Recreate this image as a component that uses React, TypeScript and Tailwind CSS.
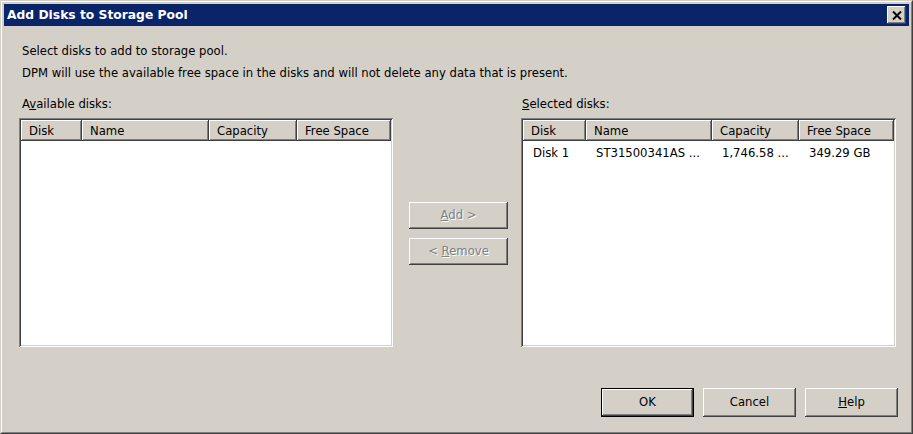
import React from "react";

const raised =
  "shadow-[inset_-1px_-1px_#404040,inset_1px_1px_#ffffff,inset_-2px_-2px_#808080,inset_2px_2px_#d4d0c8]";
const header =
  "shadow-[inset_-1px_-1px_#404040,inset_1px_1px_#ffffff,inset_-2px_-2px_#808080]";

function ListBox({
  cols,
  rows,
}: {
  cols: { label: string; w: number }[];
  rows: string[][];
}) {
  return (
    <div className="h-[229px] bg-white p-[2px] shadow-[inset_1px_1px_#808080,inset_-1px_-1px_#ffffff,inset_2px_2px_#404040,inset_-2px_-2px_#d4d0c8]">
      <div className="flex h-[21px] bg-[#d4d0c8]">
        {cols.map((c) => (
          <div
            key={c.label}
            className={`flex items-center pl-[8px] pt-[3px] whitespace-nowrap ${header}`}
            style={{ width: c.w }}
          >
            {c.label}
          </div>
        ))}
      </div>
      {rows.map((r, i) => (
        <div key={i} className="flex h-[23px] items-center pt-[3px]">
          {r.map((t, j) => (
            <div
              key={j}
              className="pl-[10px] whitespace-nowrap"
              style={{ width: cols[j].w }}
            >
              {t}
            </div>
          ))}
        </div>
      ))}
    </div>
  );
}

function Btn({
  children,
  disabled,
  isDefault,
  className = "",
}: {
  children: React.ReactNode;
  disabled?: boolean;
  isDefault?: boolean;
  className?: string;
}) {
  const inner = (
    <div
      className={`flex h-full w-full items-center justify-center ${raised} ${
        disabled ? "text-[#808080] [text-shadow:1px_1px_0_#ffffff]" : "text-black"
      }`}
    >
      {children}
    </div>
  );
  if (isDefault) {
    return (
      <div className={`border border-black ${className}`}>{inner}</div>
    );
  }
  return <div className={className}>{inner}</div>;
}

export default function App() {
  const leftCols = [
    { label: "Disk", w: 61 },
    { label: "Name", w: 127 },
    { label: "Capacity", w: 88 },
    { label: "Free Space", w: 94 },
  ];
  const rightCols = [
    { label: "Disk", w: 63 },
    { label: "Name", w: 126 },
    { label: "Capacity", w: 87 },
    { label: "Free Space", w: 95 },
  ];
  return (
    <div
      className="relative h-[434px] w-[913px] overflow-hidden bg-[#d4d0c8] text-[11.65px] text-black"
      style={{ fontFamily: '"DejaVu Sans", Verdana, sans-serif' }}
    >
      <div className="h-full w-full border border-t-[#d4d0c8] border-l-[#d4d0c8] border-r-[#404040] border-b-[#404040]">
        <div className="flex h-full w-full flex-col border border-t-white border-l-white border-r-[#808080] border-b-[#808080] p-[2px]">
          {/* title bar */}
          <div className="flex h-[22px] items-center justify-between bg-[#0a246a] pl-[3px] pr-[3px]">
            <span className="text-[12.3px] font-bold text-white">
              Add Disks to Storage Pool
            </span>
            <div
              className={`flex h-[18px] w-[19px] items-center justify-center bg-[#d4d0c8] ${raised}`}
            >
              <svg width="10" height="9" viewBox="0 0 10 9">
                <path d="M1 0.5 L9 8.5 M9 0.5 L1 8.5" stroke="#000" strokeWidth="2" />
              </svg>
            </div>
          </div>

          {/* intro */}
          <div className="pl-[18px] pt-[14px] leading-[22px]">
            <div>Select disks to add to storage pool.</div>
            <div>
              DPM will use the available free space in the disks and will not
              delete any data that is present.
            </div>
          </div>

          {/* lists */}
          <div className="mt-[12px] flex pl-[15px]">
            <div className="w-[374px]">
              <div className="mb-[6px] h-[16px] pl-[3px] leading-[16px]">
                A<span className="underline">v</span>ailable disks:
              </div>
              <ListBox cols={leftCols} rows={[]} />
            </div>
            <div className="ml-[16px] flex w-[99px] flex-col pt-[106px]">
              <Btn disabled className="h-[27px]">
                <span>
                  <span className="underline">A</span>dd &gt;
                </span>
              </Btn>
              <Btn disabled className="mt-[9px] h-[27px]">
                <span>
                  &lt; <span className="underline">R</span>emove
                </span>
              </Btn>
            </div>
            <div className="ml-[13px] w-[375px]">
              <div className="mb-[6px] h-[16px] pl-[1px] leading-[16px]">
                <span className="underline">S</span>elected disks:
              </div>
              <ListBox
                cols={rightCols}
                rows={[["Disk 1", "ST31500341AS ...", "1,746.58 ...", "349.29 GB"]]}
              />
            </div>
          </div>

          {/* bottom buttons */}
          <div className="mt-auto mb-[13px] flex justify-end gap-[9px] pr-[11px]">
            <Btn isDefault className="h-[29px] w-[93px]">
              OK
            </Btn>
            <Btn className="h-[29px] w-[93px]">Cancel</Btn>
            <Btn className="h-[29px] w-[93px]">
              <span>
                <span className="underline">H</span>elp
              </span>
            </Btn>
          </div>
        </div>
      </div>
    </div>
  );
}
